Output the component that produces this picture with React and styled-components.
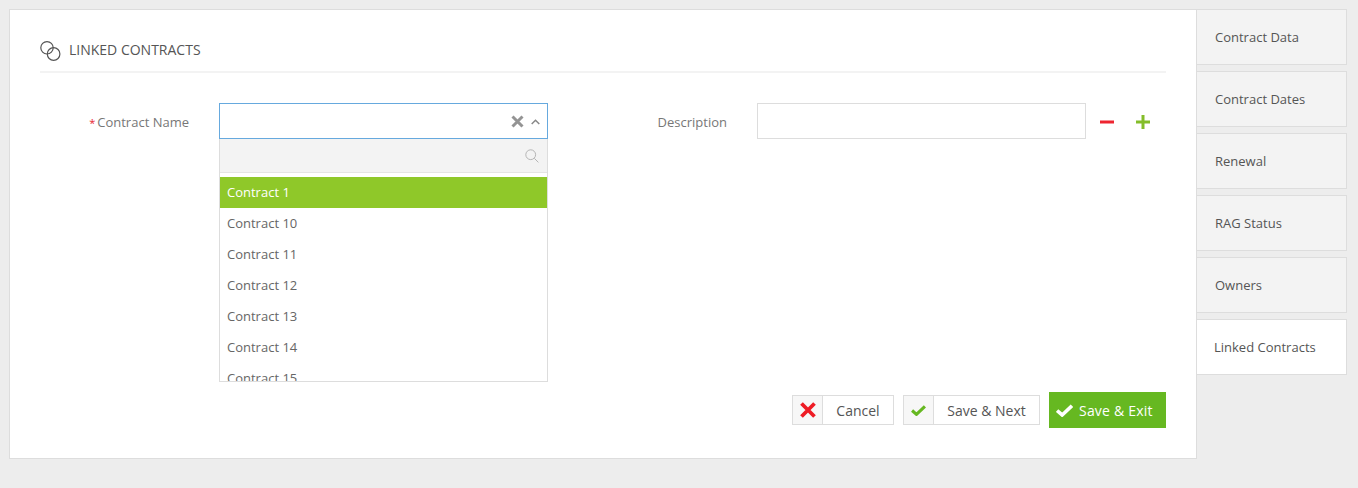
import React from "react";
import styled, { createGlobalStyle } from "styled-components";

const GlobalStyle = createGlobalStyle`
  html, body {
    margin: 0;
    height: 100%;
    background: #ededed;
  }
  body {
    font-family: "Open Sans", "Liberation Sans", sans-serif;
    font-size: 13px;
    color: #666;
  }
  * {
    box-sizing: border-box;
  }
`;

const Page = styled.div`
  display: flex;
  align-items: flex-start;
  padding: 9px 0 0 9px;
  width: 1358px;
  height: 488px;
  overflow: hidden;
`;

const Card = styled.div`
  width: 1188px;
  height: 450px;
  background: #fff;
  border: 1px solid #ddd;
  padding: 0 30px;
  display: flex;
  flex-direction: column;
`;

const Header = styled.div`
  height: 63px;
  flex: none;
  display: flex;
  align-items: center;
  gap: 8px;
  padding-top: 18px;
  border-bottom: 2px solid #f3f3f3;
  font-size: 14px;
  color: #555;
`;

const Form = styled.div`
  display: flex;
  align-items: flex-start;
  padding-top: 30px;
  height: 319px;
  flex: none;
`;

const Label = styled.label`
  width: ${(p) => p.$width}px;
  height: 36px;
  flex: none;
  display: flex;
  justify-content: flex-end;
  align-items: center;
  padding: 2px 30px 0 0;
  color: #777;
`;

const Required = styled.span`
  color: #e8222e;
  font-size: 11px;
  margin-right: 2px;
`;

const SelectWrap = styled.div`
  position: relative;
  width: 329px;
  flex: none;
`;

const SelectBox = styled.div`
  height: 36px;
  border: 1px solid #66a9de;
  display: flex;
  align-items: center;
  justify-content: flex-end;
  gap: 7px;
  padding: 1px 7px 0 0;
  background: #fff;
`;

const Dropdown = styled.div`
  position: absolute;
  top: 36px;
  left: 0;
  width: 329px;
  height: 243px;
  background: #fff;
  border: 1px solid #ddd;
  border-top: none;
  overflow: hidden;
`;

const SearchBar = styled.div`
  height: 34px;
  background: #f3f3f3;
  border-bottom: 1px solid #e4e4e4;
  display: flex;
  align-items: center;
  justify-content: flex-end;
  padding-right: 8px;
  margin-bottom: 4px;
`;

const Option = styled.div`
  height: 31px;
  display: flex;
  align-items: center;
  padding: 0 0 2px 7px;
  color: ${(p) => (p.$selected ? "#fff" : "#666")};
  background: ${(p) => (p.$selected ? "#8fc829" : "transparent")};
`;

const TextInput = styled.div`
  width: 329px;
  height: 36px;
  flex: none;
  border: 1px solid #ddd;
  background: #fff;
`;

const RowActions = styled.div`
  height: 36px;
  display: flex;
  align-items: center;
  gap: 22px;
  padding: 1px 0 0 14px;
`;

const Footer = styled.div`
  display: flex;
  justify-content: flex-end;
  align-items: center;
  gap: 9px;
`;

const IconButton = styled.div`
  width: ${(p) => p.$width}px;
  height: 30px;
  border: 1px solid #ddd;
  display: flex;
  font-size: 14px;
  color: #555;
  background: #fff;
`;

const IconCell = styled.div`
  width: 30px;
  flex: none;
  background: #f7f7f7;
  border-right: 1px solid #ddd;
  display: flex;
  align-items: center;
  justify-content: center;
`;

const ButtonText = styled.div`
  flex: 1;
  display: flex;
  align-items: center;
  justify-content: center;
`;

const PrimaryButton = styled.div`
  height: 36px;
  width: 117px;
  padding: 0 0 0 7px;
  background: #66b821;
  color: #fff;
  font-size: 14px;
  letter-spacing: 0.2px;
  display: flex;
  align-items: center;
  gap: 6px;
`;

const Tabs = styled.div`
  display: flex;
  flex-direction: column;
  gap: 6px;
  margin-left: -1px;
`;

const Tab = styled.div`
  width: 151px;
  height: 56px;
  display: flex;
  align-items: center;
  padding-left: ${(p) => (p.$active ? 17 : 18)}px;
  border: 1px solid #ddd;
  background: ${(p) => (p.$active ? "#fff" : "#f3f3f3")};
  color: #555;
`;

const RingsIcon = () => (
  <svg width="21" height="22" viewBox="0 0 21 22" fill="none" stroke="#555" strokeWidth="1.2">
    <circle cx="7" cy="8.8" r="6.2" />
    <circle cx="13.6" cy="15" r="6.3" />
  </svg>
);

const ClearIcon = () => (
  <svg width="13" height="13" viewBox="0 0 13 13" stroke="#949494" strokeWidth="3">
    <path d="M1.5 1.5l10 10M11.5 1.5l-10 10" />
  </svg>
);

const ChevronUp = () => (
  <svg width="9" height="6" viewBox="0 0 9 6" fill="none" stroke="#888" strokeWidth="1.5">
    <path d="M.7 5L4.5 1.2 8.3 5" />
  </svg>
);

const SearchIcon = () => (
  <svg width="14" height="14" viewBox="0 0 14 14" fill="none" stroke="#b5b5b5" strokeWidth="1">
    <circle cx="5.7" cy="5.7" r="4.9" />
    <path d="M9.3 9.3L13.4 13.4" />
  </svg>
);

const MinusIcon = () => (
  <svg width="14" height="14" viewBox="0 0 14 14">
    <rect y="5.5" width="14" height="3" fill="#ee2530" />
  </svg>
);

const PlusIcon = () => (
  <svg width="14" height="14" viewBox="0 0 14 14" fill="#84bd2a">
    <rect y="5.5" width="14" height="3" />
    <rect x="5.5" width="3" height="14" />
  </svg>
);

const CrossIcon = () => (
  <svg width="16" height="16" viewBox="0 0 16 16" stroke="#ee1c25" strokeWidth="3.8">
    <path d="M1.5 1.5l13 13M14.5 1.5l-13 13" />
  </svg>
);

const CheckIcon = ({ color, width, height }) => (
  <svg width={width} height={height} viewBox="0 0 16 12" fill="none" stroke={color} strokeWidth="3.4">
    <path d="M1 6l4.8 4.2L15 1.5" />
  </svg>
);

const contracts = ["Contract 1", "Contract 10", "Contract 11", "Contract 12", "Contract 13", "Contract 14", "Contract 15"];
const tabs = ["Contract Data", "Contract Dates", "Renewal", "RAG Status", "Owners", "Linked Contracts"];

export default function App() {
  return (
    <>
      <GlobalStyle />
      <Page>
        <Card>
          <Header>
            <RingsIcon />
            LINKED CONTRACTS
          </Header>
          <Form>
            <Label $width={179}>
              <Required>*</Required>Contract Name
            </Label>
            <SelectWrap>
              <SelectBox>
                <ClearIcon />
                <ChevronUp />
              </SelectBox>
              <Dropdown>
                <SearchBar>
                  <SearchIcon />
                </SearchBar>
                {contracts.map((name, i) => (
                  <Option key={name} $selected={i === 0}>
                    {name}
                  </Option>
                ))}
              </Dropdown>
            </SelectWrap>
            <Label $width={209}>Description</Label>
            <TextInput />
            <RowActions>
              <MinusIcon />
              <PlusIcon />
            </RowActions>
          </Form>
          <Footer>
            <IconButton $width={102}>
              <IconCell>
                <CrossIcon />
              </IconCell>
              <ButtonText>Cancel</ButtonText>
            </IconButton>
            <IconButton $width={137}>
              <IconCell>
                <CheckIcon color="#66b821" width={15} height={11} />
              </IconCell>
              <ButtonText>Save &amp; Next</ButtonText>
            </IconButton>
            <PrimaryButton>
              <CheckIcon color="#fff" width={17} height={13} />
              Save &amp; Exit
            </PrimaryButton>
          </Footer>
        </Card>
        <Tabs>
          {tabs.map((name, i) => (
            <Tab key={name} $active={i === tabs.length - 1}>
              {name}
            </Tab>
          ))}
        </Tabs>
      </Page>
    </>
  );
}
